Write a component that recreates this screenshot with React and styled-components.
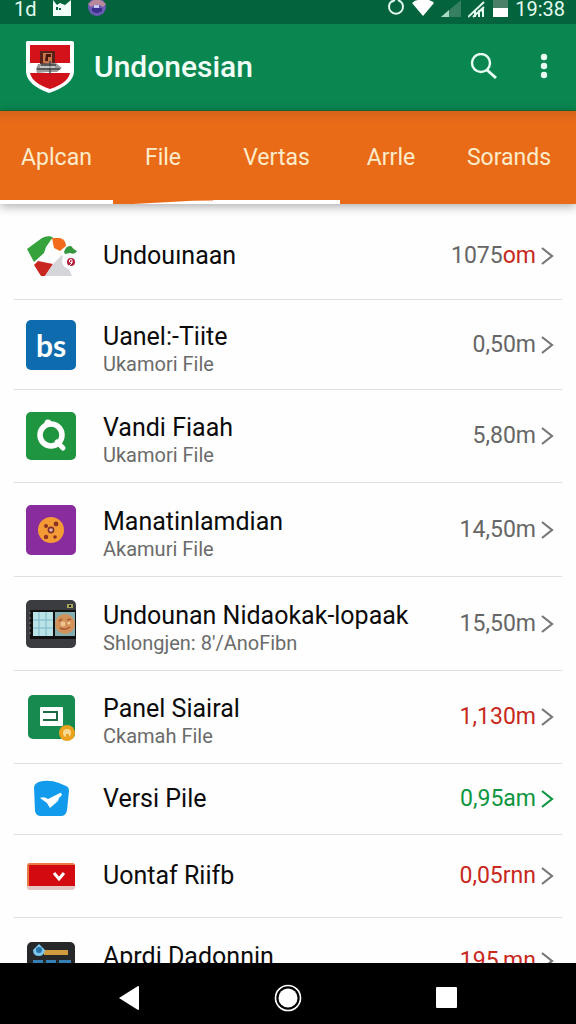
import React, { useState } from 'react';
import styled, { createGlobalStyle } from 'styled-components';

const GlobalStyle = createGlobalStyle`
  * {
    box-sizing: border-box;
  }

  body {
    margin: 0;
    background: #fefefe;
    font-family: Roboto, 'Liberation Sans', sans-serif;
  }

  button {
    font-family: inherit;
    border: none;
    background: none;
    padding: 0;
    cursor: pointer;
  }

  svg {
    display: block;
  }
`;

const Page = styled.div`
  display: flex;
  flex-direction: column;
  height: 100vh;
  overflow: hidden;
`;

const StatusBar = styled.div`
  display: flex;
  justify-content: space-between;
  flex-shrink: 0;
  height: 24px;
  padding: 0 11px 0 14px;
  background: #02633c;
  color: #e4fbf0;
  font-size: 20px;
  line-height: 18px;
`;

const StatusGroup = styled.div`
  display: flex;
  align-items: flex-start;
  gap: ${props => props.$gap}px;
`;

const AppBar = styled.header`
  display: flex;
  align-items: center;
  flex-shrink: 0;
  height: 87px;
  padding: 0 20px 0 26px;
  background: #0a8751;
  border-bottom: 1px solid #1f6b34;
`;

const AppTitle = styled.h1`
  flex: 1;
  margin: 0 0 0 20px;
  color: #f1fff8;
  font-size: 30px;
  font-weight: 500;
  line-height: 36px;
`;

const ToolButton = styled.button`
  display: flex;
  align-items: center;
  justify-content: ${props => props.$align || 'center'};
  width: 48px;
  height: 48px;
`;

const Tabs = styled.nav`
  position: relative;
  display: grid;
  grid-template-columns: 113fr 100fr 127fr 102fr 134fr;
  flex-shrink: 0;
  height: 93px;
  background: linear-gradient(#d5631a, #e96b18 12px);
  box-shadow: 0 2px 10px rgba(0, 0, 0, 0.35);
`;

const Tab = styled.button`
  display: flex;
  flex-direction: column;
  align-items: stretch;
  padding-top: 4px;
  color: #fdeccb;
  font-size: 23px;
`;

const TabLabel = styled.span`
  display: flex;
  align-items: center;
  justify-content: center;
  flex: 1;
`;

const Indicator = styled.span`
  height: 4px;
  background: ${props => (props.$shape === 'none' ? 'transparent' : '#fff')};
  clip-path: ${props => (props.$shape === 'wedge' ? 'polygon(20% 100%, 80% 20%, 100% 10%, 100% 100%)' : 'none')};
`;

const List = styled.main`
  flex: 1;
  min-height: 0;
  padding: 9px 14px 0;
  overflow: hidden;
`;

const Row = styled.a`
  display: flex;
  align-items: center;
  height: ${props => props.$height}px;
  padding: 0 8px 0 12px;
  border-bottom: 1px solid #dedfdf;
  color: #0b0b0b;
  text-decoration: none;
`;

const Texts = styled.div`
  display: flex;
  flex-direction: column;
  flex: 1;
  min-width: 0;
  min-height: ${props => (props.$tall ? 38 : 0)}px;
  padding-top: ${props => (props.$double ? 8 : 0)}px;
  margin-left: 27px;
`;

const Title = styled.span`
  font-size: 25px;
  line-height: 30px;
  white-space: nowrap;
`;

const Subtitle = styled.span`
  color: #6b6b6b;
  font-size: 20px;
  line-height: 24px;
`;

const Price = styled.span`
  margin-right: 4px;
  color: ${props => props.$color};
  font-size: 23px;
  line-height: 28px;
`;

const Unit = styled.span`
  color: #c8281d;
`;

const NavBar = styled.footer`
  display: grid;
  grid-template-columns: repeat(3, 1fr);
  flex-shrink: 0;
  height: 61px;
  padding: 0 50px 0 49px;
  background: #000;
`;

const NavButton = styled.button`
  display: flex;
  align-items: center;
  justify-content: center;
  padding-top: 8px;
`;

const Shield = () => (
  <svg width="48" height="52" viewBox="0 0 48 52">
    <path d="M1 0H46Q48 0 48 2V31Q47 44 23 52Q1 44 0 31V1Z" fill="#fff" />
    <path d="M4 4H44V22H4Z" fill="#d3121a" />
    <path d="M4 32H44Q42 42 24 48Q6 42 4 32Z" fill="#d0121a" />
    <rect x="14" y="10" width="15" height="14" fill="#5a2118" />
    <rect x="17" y="12" width="9" height="10" fill="#c9764d" />
    <path d="M20 13H25V16H22V20H19Z" fill="#4b160f" />
    <path d="M12 23L30 22L36 27L31 31H22L11 32L10 28Z" fill="#9b9b9b" />
    <path d="M11 28H34M15 24H30M24 20V33" stroke="#444" strokeWidth="1.4" />
    <path d="M14 26H29" stroke="#eee" strokeWidth="1" />
  </svg>
);

const MapIcon = () => (
  <svg width="50" height="50" viewBox="0 0 50 50" overflow="visible">
    <path d="M1 18L16 7Q21 4 27 6L20 16L18 22L8 31Z" fill="#35a23c" />
    <path d="M8 34L12 30L27 33L19 45H15Z" fill="#c92620" />
    <path d="M27 33L36 24L46 45H19Z" fill="#d5d6da" />
    <path d="M26 7L34 7Q40 9 40 15L34 20L28 17Z" fill="#f36b1d" />
    <circle cx="44" cy="30" r="8" fill="#fff" />
    <path d="M38 21Q40 14 45 15Q47 18 51 20Q49 24 44 22L39 23Z" fill="#35983e" />
    <circle cx="45" cy="31" r="4" fill="#b31f3c" />
    <path d="M46 29A1.5 1.5 0 1 0 46 31M46 29V32L43 35" stroke="#fff" strokeWidth="1" fill="none" />
  </svg>
);

const BsTile = styled.span`
  display: flex;
  align-items: center;
  justify-content: center;
  width: 50px;
  height: 50px;
  border-radius: 5px;
  background: #0e6cae;
  color: #fff;
  font-size: 30px;
  font-family: Lato, sans-serif;
  font-weight: 700;
  line-height: 48px;
`;

const SearchTile = () => (
  <svg width="50" height="50" viewBox="0 0 50 50">
    <rect x="0" y="1" width="50" height="48" rx="5" fill="#209540" />
    <circle cx="25" cy="24" r="11" fill="none" stroke="#fff" strokeWidth="5.5" />
    <circle cx="22" cy="12" r="3.5" fill="#fff" />
    <path d="M31 31L37 37" stroke="#fff" strokeWidth="5" strokeLinecap="round" />
  </svg>
);

const CookieTile = () => (
  <svg width="50" height="50" viewBox="0 0 50 50">
    <rect width="50" height="50" rx="5" fill="#892c9e" />
    <circle cx="25" cy="25" r="13" fill="#f59b36" />
    <g fill="#8c3323">
      <circle cx="20" cy="21" r="2" />
      <circle cx="30" cy="19" r="2.4" />
      <circle cx="20" cy="32" r="2.2" />
      <circle cx="29" cy="32" r="1.8" />
    </g>
    <circle cx="25" cy="25" r="2.6" fill="#e0b3b5" stroke="#80302b" strokeWidth="1.6" />
  </svg>
);

const OvenTile = () => (
  <svg width="50" height="50" viewBox="0 0 50 50">
    <rect y="1" width="50" height="48" rx="5" fill="#3b3c40" />
    <rect x="4" y="11" width="46" height="29" fill="#111" />
    <rect x="7" y="13" width="20" height="24" fill="#b9e3e6" />
    <path d="M13 13V37M20 13V37M7 21H27M7 29H27" stroke="#7db9c6" strokeWidth="1" />
    <rect x="29" y="13" width="20" height="24" fill="#85aeb0" />
    <circle cx="39" cy="25" r="10" fill="#d3925a" />
    <path d="M33 22L36 20M41 21L45 20M34 29Q39 32 44 28" stroke="#a85a33" strokeWidth="1.6" fill="none" />
    <circle cx="37" cy="25" r="2.4" fill="#f0c792" />
    <circle cx="43" cy="24" r="1.6" fill="#f0c792" />
    <path d="M41 5H47V9H41Z" fill="#a7a35c" />
    <path d="M43 6H45V8H43Z" fill="#222" />
    <path d="M4 13V38" stroke="#777" strokeWidth="1" strokeDasharray="2 3" />
  </svg>
);

const PanelTile = () => (
  <svg width="50" height="50" viewBox="0 0 50 50">
    <rect x="2" y="3" width="47" height="44" rx="5" fill="#178a50" />
    <rect x="14" y="15" width="23" height="19" rx="1" fill="#fff" />
    <path d="M17 20H31V28H17" stroke="#1c6b45" strokeWidth="2" fill="none" />
    <circle cx="41" cy="41" r="8" fill="#eda21e" />
    <circle cx="41" cy="41" r="4" fill="#fbd992" />
    <path d="M40 42H43V45H40Z" fill="#eda21e" />
  </svg>
);

const CheckTile = () => (
  <svg width="50" height="50" viewBox="0 0 50 50">
    <path d="M8 13Q9 8 17 7Q25 6 33 9L40 12Q43 13 43 17L41 36Q40 42 35 42H15Q10 42 9 37Z" fill="#129aec" />
    <path d="M14 24Q18 22 22 25L34 19Q35 18 36 21Q33 23 32 27L24 34Q22 31 21 29Z" fill="#fff" />
  </svg>
);

const RedTile = () => (
  <svg width="50" height="50" viewBox="0 0 50 50">
    <rect x="1" y="12" width="48" height="27" rx="3" fill="#e4c6c4" />
    <path d="M1 15Q1 12 4 12H46Q49 12 49 15V35H1Z" fill="#ea7b45" />
    <rect x="3" y="14" width="46" height="21" fill="#d30b10" />
    <path d="M28 22L33 28L38 22" stroke="#fff" strokeWidth="3" fill="none" />
  </svg>
);

const DarkTile = () => (
  <svg width="50" height="50" viewBox="0 0 50 50">
    <rect x="1" y="6" width="48" height="48" rx="5" fill="#26282a" />
    <rect x="18" y="14" width="24" height="5" fill="#d19c3d" />
    <path d="M13 8L19 14Q18 20 13 20Q7 20 7 14Z" fill="#7cc5ec" />
    <circle cx="13" cy="14" r="3" fill="#2474aa" />
    <path d="M7 26H17M20 26H30M33 26H45" stroke="#357fb5" strokeWidth="4" />
  </svg>
);

const Chevron = ({ color }) => (
  <svg width="14" height="20" viewBox="0 0 14 20">
    <path d="M2 2L12 10L2 18" stroke={color} strokeWidth="2.2" fill="none" />
  </svg>
);

const GREY = '#666';
const RED = '#c8281d';
const GREEN = '#0f9640';

const tabs = [
  { label: 'Aplcan', shape: 'full' },
  { label: 'File', shape: 'wedge' },
  { label: 'Vertas', shape: 'full' },
  { label: 'Arrle', shape: 'none' },
  { label: 'Sorands', shape: 'none' },
];

const items = [
  { icon: <MapIcon />, title: 'Undouınaan', price: '1075', unit: 'om', color: GREY, height: 87 },
  { icon: <BsTile>bs</BsTile>, title: 'Uanel:-Tiite', subtitle: 'Ukamori File', price: '0,50m', color: GREY, height: 90 },
  { icon: <SearchTile />, title: 'Vandi Fiaah', subtitle: 'Ukamori File', price: '5,80m', color: GREY, height: 93 },
  { icon: <CookieTile />, title: 'Manatinlamdian', subtitle: 'Akamuri File', price: '14,50m', color: GREY, height: 94 },
  { icon: <OvenTile />, title: 'Undounan Nidaokak-lopaak', subtitle: "Shlongjen: 8'/AnoFibn", price: '15,50m', color: GREY, height: 94 },
  { icon: <PanelTile />, title: 'Panel Siairal', subtitle: 'Ckamah File', price: '1,130m', color: RED, height: 93 },
  { icon: <CheckTile />, title: 'Versi Pile', price: '0,95am', color: GREEN, chevron: GREEN, height: 71 },
  { icon: <RedTile />, title: 'Uontaf Riifb', price: '0,05rnn', color: RED, height: 83 },
  { icon: <DarkTile />, title: 'Aprdi Dadonnin', tall: true, price: '195,mn', color: RED, height: 86 },
];

const App = () => {
  const [active, setActive] = useState('Aplcan');

  return (
    <Page>
      <GlobalStyle />
      <StatusBar>
        <StatusGroup $gap={16}>
          <span>1d</span>
          <svg width="18" height="17" viewBox="0 0 18 17">
            <path d="M0 0L4 5L7 3L12 5L18 0V16H0Z" fill="#f1fff8" />
            <path d="M4 7V10M7 8V10" stroke="#02633c" strokeWidth="2" />
          </svg>
          <svg width="20" height="18" viewBox="0 0 20 18">
            <circle cx="10" cy="7" r="9" fill="#6a5bb5" />
            <path d="M1 4Q10-5 19 4L16 7Q10 2 4 7Z" fill="#b98a9c" />
            <path d="M5 8H15V11Q10 15 5 11Z" fill="#3a2f8c" />
            <path d="M7 5H12V8H7Z" fill="#c9c8f2" />
          </svg>
        </StatusGroup>
        <StatusGroup $gap={7}>
          <svg width="18" height="18" viewBox="0 0 18 18">
            <path d="M5 1A7 7 0 1 0 13 1" stroke="#e4fbf0" strokeWidth="2" fill="none" />
            <path d="M4 2L8 0M14 2L11 0" stroke="#e4fbf0" strokeWidth="2" />
          </svg>
          <svg width="22" height="17" viewBox="0 0 22 17">
            <path d="M0 3Q3 0 6 0H17Q20 1 22 3L11 16Z" fill="#fff" />
          </svg>
          <svg width="20" height="18" viewBox="0 0 20 18">
            <path d="M0 17L20 0V17Z" fill="#36805f" />
            <path d="M0 17L8 10V17Z" fill="#a9dcc4" />
          </svg>
          <svg width="18" height="18" viewBox="0 0 18 18">
            <path d="M0 17L16 2M5 17L16 7M7 17V11M11 17V11L15 10V17" stroke="#e4fbf0" strokeWidth="2" fill="none" />
          </svg>
          <svg width="15" height="18" viewBox="0 0 15 18">
            <rect width="15" height="8" fill="#4a7f68" />
            <rect y="8" width="15" height="9" fill="#fff" />
          </svg>
          <span>19:38</span>
        </StatusGroup>
      </StatusBar>
      <AppBar>
        <Shield />
        <AppTitle>Undonesian</AppTitle>
        <ToolButton aria-label="Search">
          <svg width="28" height="28" viewBox="0 0 28 28">
            <circle cx="11" cy="10" r="9" fill="none" stroke="#e9fff4" strokeWidth="2.4" />
            <path d="M17 17L26 25" stroke="#e9fff4" strokeWidth="3" />
          </svg>
        </ToolButton>
        <ToolButton aria-label="More options" $align="flex-end">
          <svg width="24" height="28" viewBox="0 0 24 28">
            <g fill="#e9fff4">
              <circle cx="12" cy="4" r="3.2" />
              <circle cx="12" cy="13" r="3.2" />
              <circle cx="12" cy="22" r="3.2" />
            </g>
          </svg>
        </ToolButton>
      </AppBar>
      <Tabs>
        {tabs.map(tab => (
          <Tab key={tab.label} aria-pressed={active === tab.label} onClick={() => setActive(tab.label)}>
            <TabLabel>{tab.label}</TabLabel>
            <Indicator $shape={tab.shape} />
          </Tab>
        ))}
      </Tabs>
      <List>
        {items.map(item => (
          <Row key={item.title} href="#" $height={item.height}>
            {item.icon}
            <Texts $tall={item.tall} $double={Boolean(item.subtitle)}>
              <Title>{item.title}</Title>
              {item.subtitle && <Subtitle>{item.subtitle}</Subtitle>}
            </Texts>
            <Price $color={item.color}>
              {item.price}
              {item.unit && <Unit>{item.unit}</Unit>}
            </Price>
            <Chevron color={item.chevron || '#777'} />
          </Row>
        ))}
      </List>
      <NavBar>
        <NavButton aria-label="Back">
          <svg width="20" height="24" viewBox="0 0 20 24">
            <path d="M0 12L19 0Q20 0 20 1V23Q20 24 19 24Z" fill="#fff" />
          </svg>
        </NavButton>
        <NavButton aria-label="Home">
          <svg width="28" height="28" viewBox="0 0 28 28">
            <circle cx="14" cy="14" r="12.5" fill="none" stroke="#fff" strokeWidth="1.6" />
            <circle cx="14" cy="14" r="9.5" fill="#fff" />
          </svg>
        </NavButton>
        <NavButton aria-label="Recent apps">
          <svg width="21" height="21" viewBox="0 0 21 21">
            <rect width="21" height="21" rx="1" fill="#fff" />
          </svg>
        </NavButton>
      </NavBar>
    </Page>
  );
};

export default App;
